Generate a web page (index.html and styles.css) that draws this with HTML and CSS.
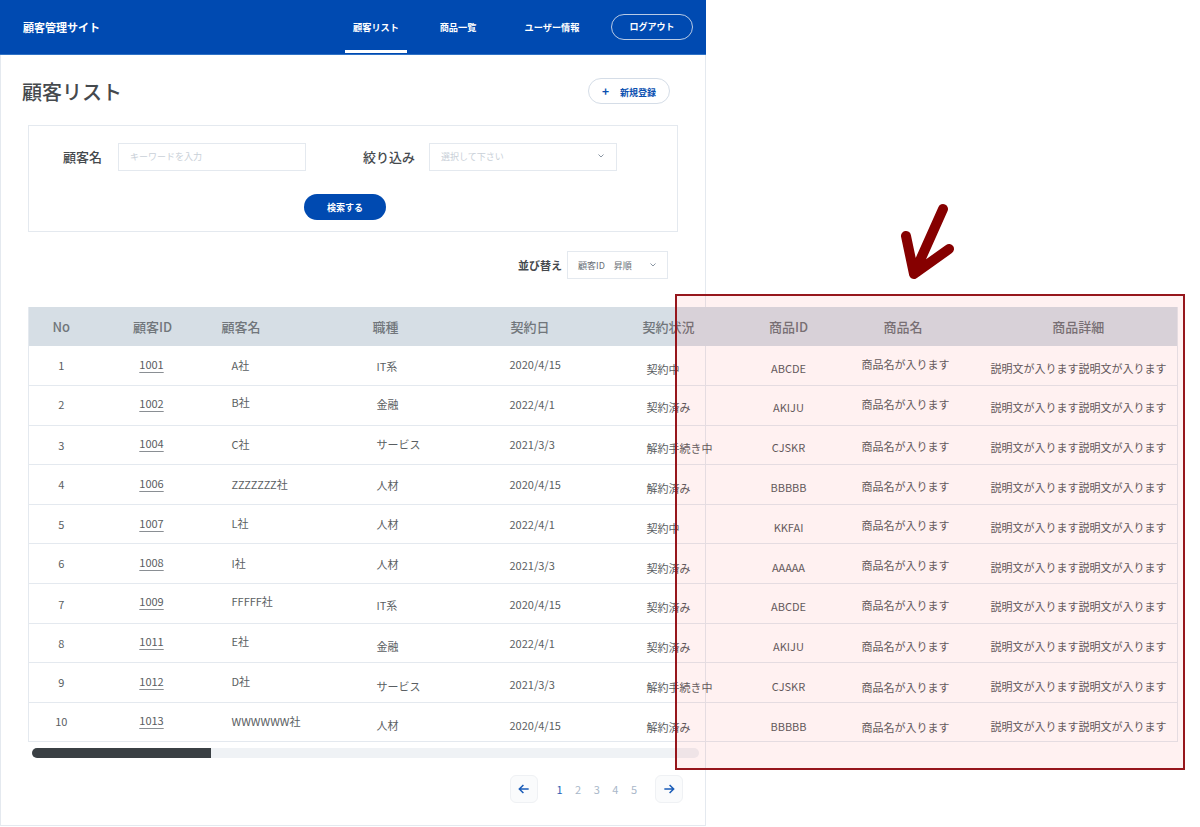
FILE: index.html
```html
<!DOCTYPE html>
<html lang="ja">
<head>
<meta charset="utf-8">
<title>顧客リスト</title>
<link rel="stylesheet" href="styles.css">
</head>
<body>
<div class="card">
  <header class="topbar">
    <div class="logo">顧客管理サイト</div>
    <nav class="nav">
      <a class="nav-item active">顧客リスト</a>
      <a class="nav-item item-2">商品一覧</a>
      <a class="nav-item item-3">ユーザー情報</a>
    </nav>
    <button class="logout">ログアウト</button>
  </header>
  <div class="title-row">
    <h1>顧客リスト</h1>
    <button class="new-btn"><span class="plus">+</span>新規登録</button>
  </div>
  <section class="search">
    <div class="search-fields">
      <label class="s-label">顧客名</label>
      <div class="field">キーワードを入力</div>
      <label class="s-label label-2">絞り込み</label>
      <div class="field">選択して下さい<svg class="chev" viewBox="0 0 8 6"><path d="M1.500 1.500 4 4l2.500-2.500"/></svg></div>
    </div>
    <button class="search-btn">検索する</button>
  </section>
  <div class="sort-row">
    <span class="sort-label">並び替え</span>
    <div class="sort-select">顧客ID　昇順<svg class="chev" viewBox="0 0 8 6"><path d="M1.500 1.500 4 4l2.500-2.500"/></svg></div>
  </div>
  <table class="tbl">
    <colgroup><col class="c1"><col class="c2"><col class="c3"><col class="c4"><col class="c5"><col class="c6"><col class="c7"><col class="c8"><col class="c9"></colgroup>
    <thead><tr><th class="ctr">No</th><th class="ctr">顧客ID</th><th>顧客名</th><th class="th4">職種</th><th class="th5">契約日</th><th class="th6">契約状況</th><th class="ctr th7">商品ID</th><th class="ctr th8">商品名</th><th class="ctr">商品詳細</th></tr></thead>
    <tbody>
      <tr><td class="ctr u2">1</td><td class="ctr u3"><a>1001</a></td><td class="nm u2">A社</td><td class="jb">IT系</td><td class="dt u3">2020/4/15</td><td class="st d6">契約中</td><td class="pi d4">ABCDE</td><td class="pn u3">商品名が入ります</td><td class="ds d4">説明文が入ります説明文が入ります</td></tr>
      <tr><td class="ctr u2">2</td><td class="ctr u4"><a>1002</a></td><td class="nm u7">B社</td><td class="jb u2">金融</td><td class="dt u3">2022/4/1</td><td class="st d4">契約済み</td><td class="pi d4">AKIJU</td><td class="pn u3">商品名が入ります</td><td class="ds d4">説明文が入ります説明文が入ります</td></tr>
      <tr><td class="ctr">3</td><td class="ctr u3"><a>1004</a></td><td class="nm u2">C社</td><td class="jb u2">サービス</td><td class="dt u2">2021/3/3</td><td class="st d6">解約手続き中</td><td class="pi d4">CJSKR</td><td class="pn d2">商品名が入ります</td><td class="ds d4">説明文が入ります説明文が入ります</td></tr>
      <tr><td class="ctr u2">4</td><td class="ctr u3"><a>1006</a></td><td class="nm u2">ZZZZZZZ社</td><td class="jb">人材</td><td class="dt u2">2020/4/15</td><td class="st d6">解約済み</td><td class="pi d4">BBBBB</td><td class="pn d2">商品名が入ります</td><td class="ds d4">説明文が入ります説明文が入ります</td></tr>
      <tr><td class="ctr">5</td><td class="ctr u3"><a>1007</a></td><td class="nm u2">L社</td><td class="jb">人材</td><td class="dt">2022/4/1</td><td class="st d8">契約中</td><td class="pi d6">KKFAI</td><td class="pn d2">商品名が入ります</td><td class="ds d6">説明文が入ります説明文が入ります</td></tr>
      <tr><td class="ctr u2">6</td><td class="ctr u3"><a>1008</a></td><td class="nm u2">I社</td><td class="jb">人材</td><td class="dt d2">2021/3/3</td><td class="st d8">契約済み</td><td class="pi d6">AAAAA</td><td class="pn d3">商品名が入ります</td><td class="ds d6">説明文が入ります説明文が入ります</td></tr>
      <tr><td class="ctr d2">7</td><td class="ctr u4"><a>1009</a></td><td class="nm u4">FFFFF社</td><td class="jb d4">IT系</td><td class="dt d2">2020/4/15</td><td class="st d8">契約済み</td><td class="pi d6">ABCDE</td><td class="pn d4">商品名が入ります</td><td class="ds d6">説明文が入ります説明文が入ります</td></tr>
      <tr><td class="ctr">8</td><td class="ctr u3"><a>1011</a></td><td class="nm u3">E社</td><td class="jb d6">金融</td><td class="dt">2022/4/1</td><td class="st d8">契約済み</td><td class="pi d6">AKIJU</td><td class="pn d6">商品名が入ります</td><td class="ds d6">説明文が入ります説明文が入ります</td></tr>
      <tr><td class="ctr u2">9</td><td class="ctr u3"><a>1012</a></td><td class="nm u3">D社</td><td class="jb d6">サービス</td><td class="dt d3">2021/3/3</td><td class="st d8">解約手続き中</td><td class="pi d6">CJSKR</td><td class="pn d8">商品名が入ります</td><td class="ds d6">説明文が入ります説明文が入ります</td></tr>
      <tr><td class="ctr u3">10</td><td class="ctr u4"><a>1013</a></td><td class="nm u3">WWWWWW社</td><td class="jb d6">人材</td><td class="dt d6">2020/4/15</td><td class="st d10">解約済み</td><td class="pi d8">BBBBB</td><td class="pn d10">商品名が入ります</td><td class="ds d8">説明文が入ります説明文が入ります</td></tr>
    </tbody>
  </table>
  <div class="scrollbar"><div class="thumb"></div></div>
  <div class="pager">
    <button class="pg-btn"><svg viewBox="0 0 12 12"><path d="M10 6H2M5.500 2.500 2 6l3.500 3.500"/></svg></button>
    <div class="pg-nums"><span class="cur">1</span><span>2</span><span>3</span><span>4</span><span>5</span></div>
    <button class="pg-btn"><svg viewBox="0 0 12 12"><path d="M2 6h8M6.500 2.500 10 6 6.500 9.500"/></svg></button>
  </div>
</div>
<svg class="arrow" viewBox="0 0 60 80"><path d="M46 7 17 72M9 34l8 38 35-25" /></svg>
<div class="highlight"></div>
</body>
</html>
```

FILE: styles.css
```css
* { box-sizing: border-box; }
html, body { margin: 0; padding: 0; background: #fff; }
body {
  width: 1200px; height: 827px; overflow: hidden; position: relative;
  font-family: "Noto Sans CJK JP", "Noto Sans", sans-serif; color: #4a4f54;
}
button { font-family: inherit; cursor: pointer; }
.card {
  width: 706px; height: 826px;
  border: 1px solid #e4e9ef; border-top: 0;
  display: flex; flex-direction: column;
}
.topbar {
  height: 55px; margin: 0 -1px; padding: 0 13px 1px 23px;
  background: #004ab1; border-bottom: 1px solid #2f72c6;
  display: flex; align-items: center; color: #fff;
}
.logo { font-size: 11px; font-weight: 700; }
.nav { margin-left: auto; display: flex; height: 100%; align-items: center; }
.nav-item {
  width: 62px; height: 100%; display: flex; align-items: center; justify-content: center;
  font-size: 9.200px; font-weight: 700; border-bottom: 3px solid transparent; padding-top: 3px;
}
.nav-item.active { border-bottom-color: #fff; }
.item-2 { margin-left: 20px; }
.item-3 { margin-left: 32px; }
.logout {
  margin-left: 28px; width: 82px; height: 26px; border-radius: 13px;
  background: transparent; border: 1px solid #b9cbe6; color: #fff;
  font-size: 9px; font-weight: 700; padding: 0;
}
.title-row {
  display: flex; align-items: center; justify-content: space-between;
  padding: 4px 35px 0 21px; height: 70px;
}
h1 { margin: 0; font-size: 20px; font-weight: 500; color: #45494d; line-height: 30px; }
.new-btn {
  width: 82px; height: 26px; border-radius: 13px; margin-top: -3px; padding: 0;
  background: #fff; border: 1px solid #d5dde7; color: #0a4fb0;
  font-size: 9px; font-weight: 700;
}
.plus { font-size: 12px; margin-right: 11px; }
.search {
  margin: 0 27px; width: 650px; height: 107px;
  border: 1px solid #e4e9ef; padding-top: 17px;
  display: flex; flex-direction: column; align-items: center;
}
.search-fields { display: flex; align-items: center; width: 100%; padding-left: 34px; }
.s-label { font-size: 13px; font-weight: 500; color: #45494d; width: 55px; padding-bottom: 2px; }
.label-2 { margin-left: 57px; width: 66px; }
.field {
  width: 188px; height: 28px; border: 1px solid #e4e9ef; padding: 0 11px 2px;
  font-size: 9px; color: #c9d0d8; display: flex; align-items: center; justify-content: space-between;
}
.chev { width: 8px; height: 6px; fill: none; stroke: #8a96a3; stroke-width: 1; }
.search-btn {
  margin: 23px 16px 0 0; width: 82px; height: 26px; border-radius: 13px; border: 0;
  background: #004ab1; color: #fff; font-size: 9px; font-weight: 700; padding: 0;
}
.sort-row {
  display: flex; justify-content: flex-end; align-items: center; gap: 5px;
  margin-top: 19px; padding-right: 37px; height: 28px;
}
.sort-label { font-size: 11px; font-weight: 700; color: #45494d; }
.sort-select {
  width: 101px; height: 28px; border: 1px solid #e4e9ef; padding: 0 10px;
  font-size: 9px; color: #6a7076; display: flex; align-items: center; justify-content: space-between;
}
.tbl {
  margin: 28px 0 0 27px; width: 1149px; min-width: 1149px; table-layout: fixed; border-collapse: collapse;
  font-size: 11px; color: #5a5e62; flex: none; border-left: 1px solid #e4e9ef; border-right: 1px solid #e4e9ef;
}
.c1 { width: 65px; } .c2 { width: 118px; } .c3 { width: 151px; } .c4 { width: 137px; } .c5 { width: 133px; }
.c6 { width: 122px; } .c7 { width: 96px; } .c8 { width: 129px; } .c9 { width: 198px; }
th {
  height: 39px; padding: 0 0 0 10px; background: #d6dee5; text-align: left;
  font-size: 13px; font-weight: 500; color: #71767b;
}
th.ctr { text-align: center; padding: 0; }
th.th4 { padding-left: 10px; } th.th5 { padding-left: 11px; } th.th6 { padding-left: 10px; }
th.th7 { padding-right: 28px; }
th.th8 { padding-right: 24px; padding-left: 0; }
tbody tr { height: 39.600px; border-bottom: 1.500px solid #e4e9ef; }
td { padding: 0; white-space: nowrap; }
td.ctr { text-align: center; }
td.pi { text-align: center; padding-right: 28px; }
td.u2 { padding-bottom: 2px; }
td.u3 { padding-bottom: 3px; }
td.u4 { padding-bottom: 4px; }
td.u7 { padding-bottom: 7px; }
td.d2 { padding-top: 2px; }
td.d3 { padding-top: 3px; }
td.d4 { padding-top: 4px; }
td.d6 { padding-top: 6px; }
td.d8 { padding-top: 8px; }
td.d10 { padding-top: 10px; }
td.nm { padding-left: 20px; }
td.jb { padding-left: 14px; }
td.dt { padding-left: 10px; }
td.st { padding-left: 14px; }
td.pn { padding-left: 11px; }
td.ds { padding-left: 11px; }
td a { margin-right: 2px; text-decoration: underline; text-underline-offset: 3px; text-decoration-color: #8a8f94; }
.scrollbar {
  margin: 6px 0 0 31px; width: 667px; height: 10px; border-radius: 5px; background: #eff2f5; flex: none;
}
.thumb { width: 179px; height: 100%; background: #3a4044; border-radius: 5px 0 0 5px; }
.pager {
  display: flex; justify-content: flex-end; align-items: center;
  margin-top: 17px; padding-right: 22px;
}
.pg-btn {
  width: 28px; height: 28px; border-radius: 6px; border: 1px solid #eff1f4;
  background: #fafbfc; padding: 6px; display: flex;
}
.pg-btn svg { width: 14px; height: 14px; fill: none; stroke: #1a5cb8; stroke-width: 1.300; }
.pg-nums { display: flex; gap: 12.500px; margin: 0 18px; font-size: 11px; color: #a9b7c9; }
.cur { color: #2a63b5; }
.arrow {
  position: absolute; left: 897px; top: 202px; width: 60px; height: 80px;
  fill: none; stroke: #860000; stroke-width: 10; stroke-linecap: round; stroke-linejoin: round;
}
.highlight {
  position: absolute; left: 675px; top: 294px; width: 510px; height: 476px;
  border: 2px solid #96161c; background: rgba(255, 0, 0, .055);
}
```
